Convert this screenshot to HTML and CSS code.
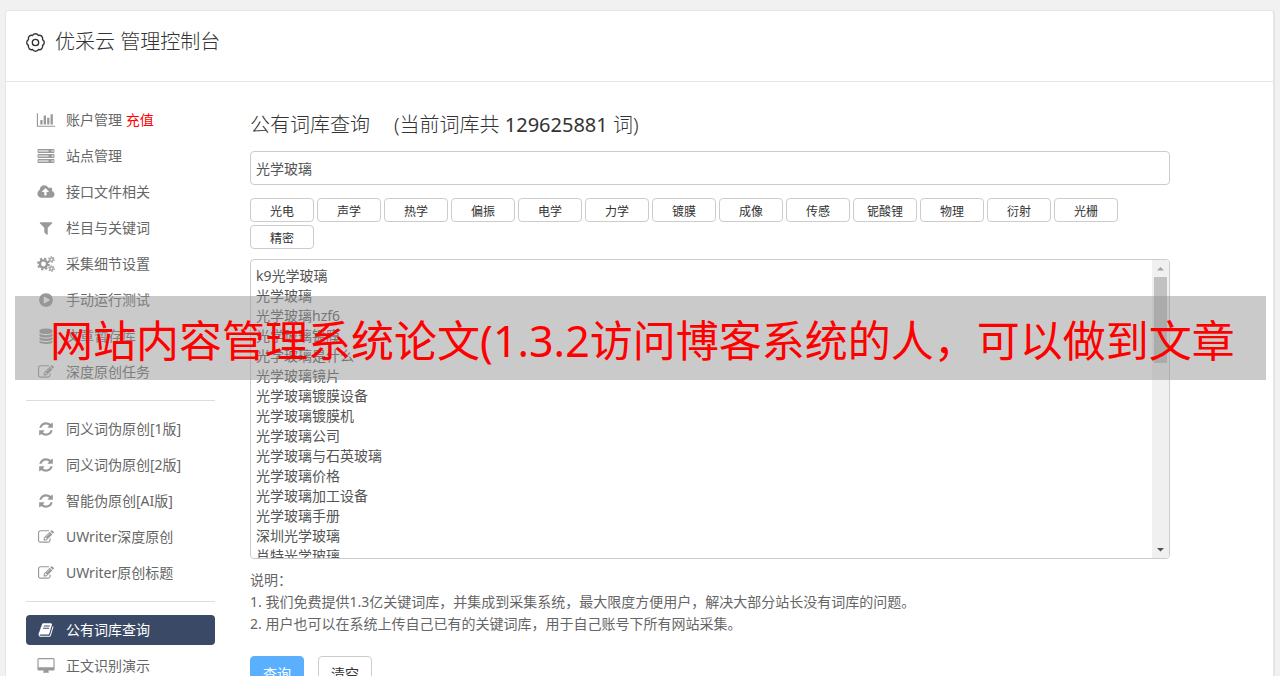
FILE: index.html
```html
<!DOCTYPE html>
<html lang="zh-CN">
<head>
    <meta charset="UTF-8">
    <meta name="viewport" content="width=device-width, initial-scale=1.0">
    <title>优采云 管理控制台</title>
    <link rel="stylesheet" href="styles.css">
</head>
<body>
    <!-- icon set -->
    <svg class="sprite" aria-hidden="true">
        <symbol id="i-chart" viewBox="0 0 2048 1792"><path d="M640 896v512h-256v-512h256zm384-512v1024h-256v-1024h256zm1024 1152v128h-2048v-1536h128v1408h1920zm-640-896v768h-256v-768h256zm384-384v1152h-256v-1152h256z"/></symbol>
        <symbol id="i-server" viewBox="0 0 17 16">
            <path fill="none" stroke="currentColor" d="M.5 1.500h16v3H.5zM.5 6.500h16v3H.5zM.5 11.500h16v3H.5z"/>
            <path opacity=".5" d="M1 2h15v2H1zM1 7h15v2H1zM1 12h15v2H1z"/>
            <path d="M11 2h3v2h-3zM11 7h3v2h-3zM11 12h3v2h-3z"/>
        </symbol>
        <symbol id="i-cloud" viewBox="-64 0 1920 1792"><path d="M1216 864q0-14-9-23l-352-352q-9-9-23-9t-23 9l-351 351q-10 12-10 24 0 14 9 23t23 9h224v352q0 13 9.500 22.500t22.500 9.500h192q13 0 22.500-9.500t9.500-22.500v-352h224q13 0 22.500-9.500t9.500-22.500zm640 288q0 159-112.500 271.500t-271.500 112.500h-1088q-185 0-316.500-131.500t-131.500-316.500q0-130 70-240t188-165q-2-30-2-43 0-212 150-362t362-150q156 0 285.500 87t188.500 231q71-62 166-62 106 0 181 75t75 181q0 76-41 138 130 31 213.500 135.500t83.500 238.500z"/></symbol>
        <symbol id="i-filter" viewBox="0 0 1792 1792"><path d="M1595 295q17 41-14 70l-493 493v742q0 42-39 59-13 5-25 5-27 0-45-19l-256-256q-19-19-19-45v-486l-493-493q-31-29-14-70 17-39 59-39h1280q42 0 59 39z"/></symbol>
        <symbol id="i-cogs" viewBox="0 0 18 16">
            <g fill="none" stroke="currentColor">
                <circle cx="6.500" cy="8" r="3.600" stroke-width="2.400"/>
                <circle cx="6.500" cy="8" r="5.400" stroke-width="2" stroke-dasharray="2.200 2.041"/>
                <circle cx="14.500" cy="3.500" r="1.700" stroke-width="1.200"/>
                <circle cx="14.500" cy="3.500" r="2.700" stroke-width="1.200" stroke-dasharray="1.400 1.427"/>
                <circle cx="14.500" cy="12.500" r="1.700" stroke-width="1.200"/>
                <circle cx="14.500" cy="12.500" r="2.700" stroke-width="1.200" stroke-dasharray="1.400 1.427"/>
            </g>
        </symbol>
        <symbol id="i-play" viewBox="0 0 1792 1792"><path d="M896 128q209 0 385.500 103t279.500 279.500 103 385.500-103 385.500-279.500 279.500-385.500 103-385.500-103-279.500-279.500-103-385.500 103-385.500 279.500-279.500 385.500-103zm384 823q32-18 32-55t-32-55l-544-320q-31-19-64-1-32 19-32 56v640q0 37 32 56 16 8 32 8 17 0 32-9z"/></symbol>
        <symbol id="i-database" viewBox="0 0 16 16"><path d="M1.500 2.500C1.500-.3 14.500-.3 14.500 2.500V4C14.500 6.700 1.500 6.700 1.500 4zM1.500 5.800C4 7.700 12 7.700 14.500 5.800V7.500C14.500 10.200 1.500 10.200 1.500 7.500zM1.500 9.300C4 11.200 12 11.200 14.500 9.300V11C14.500 13.600 1.500 13.600 1.500 11zM1.500 12.700C4 14.600 12 14.600 14.500 12.700V14C14.500 16.600 1.500 16.600 1.500 14z"/></symbol>
        <symbol id="i-edit" viewBox="0 0 1792 1792"><path d="M888 1184l116-116-152-152-116 116v56h96v96h56zm440-720q-16-16-33 1l-350 350q-17 17-1 33t33-1l350-350q17-17 1-33zm80 594v190q0 119-84.500 203.500t-203.500 84.500h-832q-119 0-203.500-84.500t-84.500-203.500v-832q0-119 84.500-203.500t203.500-84.500h832q63 0 117 25 15 7 18 23 3 17-9 29l-49 49q-14 14-32 8-23-6-45-6h-832q-66 0-113 47t-47 113v832q0 66 47 113t113 47h832q66 0 113-47t47-113v-126q0-13 9-22l64-64q15-15 35-7t20 29zm-96-738l288 288-672 672h-288v-288zm444 132l-92 92-288-288 92-92q28-28 68-28t68 28l152 152q28 28 28 68t-28 68z"/></symbol>
        <symbol id="i-refresh" viewBox="0 0 1792 1792"><path d="M1639 1056q0 5-1 7-64 268-268 434.500t-478 166.500q-146 0-282.500-55t-243.500-157l-129 129q-19 19-45 19t-45-19-19-45v-448q0-26 19-45t45-19h448q26 0 45 19t19 45-19 45l-137 137q71 66 161 102t187 36q134 0 250-65t186-179q11-17 53-117 8-23 30-23h192q13 0 22.500 9.500t9.500 22.500zm25-800v448q0 26-19 45t-45 19h-448q-26 0-45-19t-19-45 19-45l138-138q-148-137-349-137-134 0-250 65t-186 179q-11 17-53 117-8 23-30 23h-199q-13 0-22.500-9.500t-9.500-22.500v-7q65-268 270-434.500t480-166.500q146 0 284 55.500t245 156.500l130-129q19-19 45-19t45 19 19 45z"/></symbol>
        <symbol id="i-book" viewBox="0 0 1792 1792"><path d="M1703 478q40 57 18 129l-275 906q-19 64-76.500 107.500t-122.500 43.500h-923q-77 0-148.500-53.500t-99.500-131.500q-24-67-2-127 0-4 3-27t4-37q1-8-3-21.500t-3-19.500q2-11 8-21t16.500-23.500 16.500-23.500q23-38 45-91.500t30-91.500q3-10 .5-30t-.5-28q3-11 17-28t17-23q21-36 42-92t25-90q1-9-2.500-32t.5-28q4-13 22-30.500t22-22.500q19-26 42.500-84.500t27.500-96.500q1-8-3-25.500t-2-26.500q2-8 9-18t18-23 17-21q8-12 16.500-30.500t15-35 16-36 19.500-32 26.500-23.500 36-11.500 47.500 5.500l-1 3q38-9 51-9h761q74 0 114 56t18 130l-274 906q-36 119-71.500 153.500t-128.500 34.500h-869q-27 0-38 15-11 16-1 43 24 70 144 70h923q29 0 56-15.500t35-41.500l300-987q7-22 5-57 38 15 59 43zm-1064 2q-4 13 2 22.500t20 9.500h608q13 0 25.500-9.500t16.500-22.500l21-64q4-13-2-22.500t-20-9.500h-608q-13 0-25.500 9.500t-16.500 22.500zm-83 256q-4 13 2 22.500t20 9.500h608q13 0 25.500-9.500t16.500-22.500l21-64q4-13-2-22.500t-20-9.500h-608q-13 0-25.500 9.500t-16.500 22.500z"/></symbol>
        <symbol id="i-desktop" viewBox="0 0 1920 1792"><path d="M1792 992v-832q0-13-9.500-22.500t-22.500-9.500h-1600q-13 0-22.500 9.500t-9.500 22.500v832q0 13 9.500 22.500t22.500 9.500h1600q13 0 22.500-9.500t9.500-22.500zm128-832v1088q0 66-47 113t-113 47h-544q0 37 16 77.500t32 71 16 43.500q0 26-19 45t-45 19h-512q-26 0-45-19t-19-45q0-14 16-44t32-70 16-78h-544q-66 0-113-47t-47-113v-1088q0-66 47-113t113-47h1600q66 0 113 47t47 113z"/></symbol>
    </svg>

    <div class="panel">
        <header class="panel-header">
            <svg class="gear" viewBox="-9 -9 18 18" fill="none" stroke="currentColor" stroke-width="1.300" stroke-linejoin="round">
                <path d="M6.650-2.750A3.100 3.100 0 0 1 6.650 2.750A3.100 3.100 0 0 1 2.750 6.650A3.100 3.100 0 0 1-2.750 6.650A3.100 3.100 0 0 1-6.650 2.750A3.100 3.100 0 0 1-6.650-2.750A3.100 3.100 0 0 1-2.750-6.650A3.100 3.100 0 0 1 2.750-6.650A3.100 3.100 0 0 1 6.650-2.750z"/>
                <circle r="3"/>
            </svg>
            <h1>优采云 管理控制台</h1>
        </header>

        <div class="panel-body">
            <nav class="menu">
                <a href="#"><svg><use href="#i-chart"/></svg><span>账户管理 <b>充值</b></span></a>
                <a href="#"><svg><use href="#i-server"/></svg>站点管理</a>
                <a href="#"><svg><use href="#i-cloud"/></svg>接口文件相关</a>
                <a href="#"><svg><use href="#i-filter"/></svg>栏目与关键词</a>
                <a href="#"><svg><use href="#i-cogs"/></svg>采集细节设置</a>
                <a href="#"><svg><use href="#i-play"/></svg>手动运行测试</a>
                <a href="#"><svg><use href="#i-database"/></svg>文章暂存库</a>
                <a href="#"><svg><use href="#i-edit"/></svg>深度原创任务</a>
                <hr>
                <a href="#"><svg><use href="#i-refresh"/></svg>同义词伪原创[1版]</a>
                <a href="#"><svg><use href="#i-refresh"/></svg>同义词伪原创[2版]</a>
                <a href="#"><svg><use href="#i-refresh"/></svg>智能伪原创[AI版]</a>
                <a href="#"><svg><use href="#i-edit"/></svg>UWriter深度原创</a>
                <a href="#"><svg><use href="#i-edit"/></svg>UWriter原创标题</a>
                <hr>
                <a href="#" class="active"><svg><use href="#i-book"/></svg>公有词库查询</a>
                <a href="#"><svg><use href="#i-desktop"/></svg>正文识别演示</a>
            </nav>

            <main class="content">
                <h2><label for="keyword">公有词库查询</label> <span>(当前词库共 <b>129625881</b> 词)</span></h2>
                <input type="text" id="keyword" class="keyword" value="光学玻璃">
                <div class="tags">
                    <button>光电</button>
                    <button>声学</button>
                    <button>热学</button>
                    <button>偏振</button>
                    <button>电学</button>
                    <button>力学</button>
                    <button>镀膜</button>
                    <button>成像</button>
                    <button>传感</button>
                    <button>铌酸锂</button>
                    <button>物理</button>
                    <button>衍射</button>
                    <button>光栅</button>
                    <button>精密</button>
                </div>
                <div class="result-box">
                    <textarea id="result" class="result" aria-label="查询">k9光学玻璃
光学玻璃
光学玻璃hzf6
光学玻璃镀膜
光学玻璃是什么
光学玻璃镜片
光学玻璃镀膜设备
光学玻璃镀膜机
光学玻璃公司
光学玻璃与石英玻璃
光学玻璃价格
光学玻璃加工设备
光学玻璃手册
深圳光学玻璃
肖特光学玻璃</textarea>
                    <div class="scrollbar" aria-hidden="true">
                        <svg viewBox="0 0 17 17"><path d="M5 10.500L8.500 7L12 10.500z" fill="#a3a3a3"/></svg>
                        <div class="thumb"></div>
                        <svg viewBox="0 0 17 17"><path d="M5 7L8.500 10.500L12 7z" fill="#505050"/></svg>
                    </div>
                </div>
                <div class="notes">
                    <p>说明：</p>
                    <p>1. 我们免费提供1.3亿关键词库，并集成到采集系统，最大限度方便用户，解决大部分站长没有词库的问题。</p>
                    <p>2. 用户也可以在系统上传自己已有的关键词库，用于自己账号下所有网站采集。</p>
                </div>
                <div class="actions">
                    <button class="primary">查询</button>
                    <button>清空</button>
                </div>
            </main>
        </div>
    </div>

    <div class="banner">网站内容管理系统论文(1.3.2访问博客系统的人，可以做到文章</div>
</body>
</html>
```
FILE: styles.css
```css
* {
    box-sizing: border-box;
}

body {
    margin: 0;
    padding: 10px 5px 0;
    background-color: #f1f1f1;
    color: #666;
    font-family: "Noto Sans", "Noto Sans CJK SC", sans-serif;
    font-size: 14px;
    line-height: 20px;
}

button, input, textarea {
    font-family: inherit;
    border: 1px solid #ccc;
    border-radius: 4px;
    background-color: #fff;
}

button {
    color: #333;
    padding: 0;
    cursor: pointer;
}

.sprite {
    display: none;
}

.panel {
    background-color: #fff;
    border: 1px solid #e5e5e5;
    border-right-width: 2px;
    border-radius: 4px 4px 0 0;
}

.panel-header {
    display: flex;
    align-items: center;
    gap: 10px;
    height: 71px;
    padding: 0 20px 8px;
    border-bottom: 1px solid #e5e5e5;
    color: #333;
}

.gear {
    width: 19px;
    height: 19px;
}

h1, h2 {
    margin: 0;
    font-size: 20px;
    font-weight: 300;
    line-height: 30px;
    color: #333;
}

.panel-body {
    display: flex;
    gap: 35px;
    padding: 23px 103px 20px 20px;
}

/* left menu */
.menu {
    flex: none;
    width: 189px;
}

.menu a {
    display: flex;
    align-items: center;
    gap: 10px;
    height: 30px;
    margin-bottom: 6px;
    padding: 0 10px;
    border-radius: 4px;
    color: #666;
    text-decoration: none;
}

.menu svg {
    width: 20px;
    height: 16px;
    color: #999;
    fill: currentColor;
}

.menu b {
    color: #f00;
    font-weight: normal;
}

.menu a.active,
.menu a.active svg {
    color: #fff;
}

.menu a.active {
    background-color: #3a4a66;
}

.menu hr {
    height: 1px;
    margin: 13px 0;
    border: none;
    background-color: #ddd;
}

/* right side */
.content {
    flex: 1;
    min-width: 0;
    padding-top: 5px;
}

h2 {
    display: flex;
    gap: 24px;
}

h2 b {
    font-weight: 400;
}

.keyword {
    display: block;
    width: 100%;
    height: 34px;
    margin: 11px 0 13px;
    padding: 0 5px;
    font-size: 14px;
    color: #555;
}

.tags {
    display: flex;
    flex-wrap: wrap;
    gap: 3px;
}

.tags button {
    width: 64px;
    height: 24px;
    padding-top: 2px;
    font-size: 12px;
}

.result-box {
    position: relative;
    height: 300px;
    margin: 10px 0;
}

.result {
    display: block;
    width: 100%;
    height: 100%;
    padding: 6px 22px 6px 5px;
    font-size: 14px;
    line-height: 20px;
    color: #555;
    resize: none;
    overflow: hidden;
}

.scrollbar {
    position: absolute;
    top: 1px;
    right: 1px;
    bottom: 1px;
    display: flex;
    flex-direction: column;
    width: 17px;
    border-radius: 0 3px 3px 0;
    background-color: #f0f0f0;
}

.scrollbar svg {
    width: 17px;
    height: 17px;
}

.thumb {
    height: 86px;
    margin: 0 2px auto;
    background-color: #c1c1c1;
}

.notes p {
    margin: 0;
    line-height: 22px;
}

.actions {
    display: flex;
    gap: 14px;
    margin-top: 21px;
}

.actions button {
    width: 54px;
    height: 34px;
    font-size: 14px;
}

.actions .primary {
    border-color: #5aafff;
    background-color: #5aafff;
    color: #fff;
}

/* strip over the page */
.banner {
    position: absolute;
    top: 296px;
    left: 15px;
    right: 14px;
    padding: 6px 35px 0;
    overflow: hidden;
    background-color: rgba(150, 150, 150, 0.5);
    color: #f00;
    font-size: 43px;
    line-height: 78px;
    white-space: nowrap;
}
```
